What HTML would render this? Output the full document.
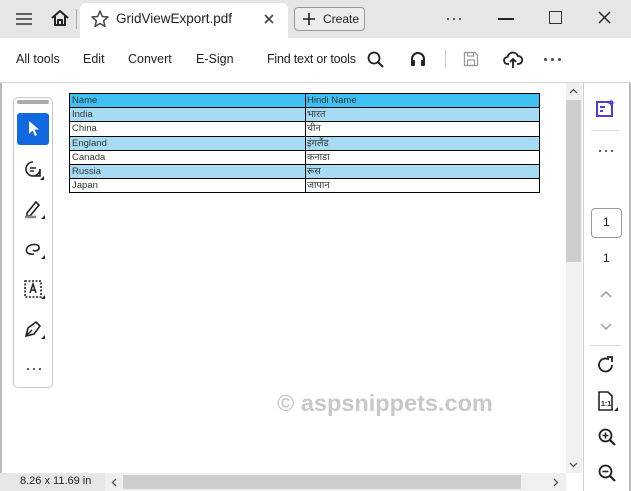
<!DOCTYPE html>
<html><head><meta charset="utf-8"><style>
*{margin:0;padding:0;box-sizing:border-box}
body{width:631px;height:491px;overflow:hidden;background:#fff;font-family:"Liberation Sans",sans-serif;position:relative;color:#222}
.abs{position:absolute}
.tb{left:0;top:0;width:631px;height:38px;background:#e6e6e6}
.tab{left:80px;top:3px;width:208px;height:35px;background:#fff;border-radius:6px 6px 0 0}
.t{font-size:13px;color:#222;white-space:nowrap}
.tool{top:38px;left:0;width:631px;height:45px;background:#fff;border-bottom:1px solid #d6d6d6}
.grid{position:absolute;left:69px;top:93px;width:471px;height:100px;border:1px solid #000;font-family:"Liberation Sans","DejaVu Sans",sans-serif;font-size:9.5px;color:#333}
.r{position:absolute;left:0;width:469px;height:14.2px;border-bottom:1px solid #000}
.r span{position:absolute;top:1px;line-height:12px;white-space:nowrap}
.r span:first-child{left:2px}
.r span:last-child{left:237px}
svg{position:absolute;overflow:visible}
.dots{position:absolute;display:flex;gap:4px}
.dots i{display:block;width:2px;height:2px;border-radius:1px;background:#333}
</style></head><body>
<div class="abs tb"></div>
<div class="abs tab"></div>
<svg style="left:15px;top:12px" width="18" height="14"><path d="M1 2H17M1 7H17M1 12H17" stroke="#333" stroke-width="1.6"/></svg>
<svg style="left:50px;top:9px" width="20" height="18"><path d="M2 9L10 2L18 9M5 7V16H15V7M8 16V11H12V16" stroke="#222" stroke-width="2" fill="none" stroke-linejoin="round"/></svg>
<div class="abs" style="left:76px;top:9px;width:1px;height:20px;background:#aaa"></div>
<svg style="left:91px;top:10px" width="18" height="18"><path d="M9 1L11.3 6.5L17 7L12.6 10.8L14 16.5L9 13.5L4 16.5L5.4 10.8L1 7L6.7 6.5Z" stroke="#444" stroke-width="1.5" fill="none" stroke-linejoin="round"/></svg>
<div class="abs t" style="left:116px;top:11px;font-size:13.5px">GridViewExport.pdf</div>
<svg style="left:264px;top:14px" width="10" height="10"><path d="M1 1L9 9M9 1L1 9" stroke="#444" stroke-width="1.6"/></svg>
<div class="abs" style="left:294px;top:7px;width:71px;height:24px;border:1px solid #999;border-radius:4px;background:#ececec"></div>
<svg style="left:303px;top:13px" width="12" height="12"><path d="M6 0V12M0 6H12" stroke="#222" stroke-width="1.6"/></svg>
<div class="abs t" style="left:323px;top:12px;font-size:12px">Create</div>
<div class="dots" style="left:447px;top:18px"><i></i><i></i><i></i></div>
<div class="abs" style="left:498px;top:18px;width:16px;height:2px;background:#222"></div>
<div class="abs" style="left:549px;top:11px;width:13px;height:13px;border:1.5px solid #333"></div>
<svg style="left:598px;top:11px" width="13" height="13"><path d="M1 1L12 12M12 1L1 12" stroke="#222" stroke-width="1.5"/></svg>

<div class="abs tool"></div>
<div class="abs t" style="left:16px;top:52px;font-size:12.5px">All tools</div>
<div class="abs t" style="left:83px;top:52px;font-size:12.5px">Edit</div>
<div class="abs t" style="left:128px;top:52px;font-size:12.5px">Convert</div>
<div class="abs t" style="left:196px;top:52px;font-size:12.5px">E-Sign</div>
<div class="abs t" style="left:267px;top:52px;font-size:12.5px;letter-spacing:-0.2px">Find text or tools</div>
<svg style="left:367px;top:51px" width="17" height="17"><circle cx="7" cy="7" r="5.5" stroke="#222" stroke-width="1.8" fill="none"/><path d="M11 11L16 16" stroke="#222" stroke-width="2"/></svg>
<svg style="left:410px;top:51px" width="16" height="16"><path d="M2 13V8A6 6 0 0 1 14 8V13" stroke="#222" stroke-width="2" fill="none"/><rect x="1" y="9" width="4" height="6" rx="1" fill="#222"/><rect x="11" y="9" width="4" height="6" rx="1" fill="#222"/></svg>
<div class="abs" style="left:445px;top:50px;width:1px;height:18px;background:#ccc"></div>
<svg style="left:463px;top:51px" width="16" height="16"><path d="M1.5 1.5H12L14.5 4V14.5H1.5Z" stroke="#999" stroke-width="1.3" fill="none"/><rect x="4.5" y="9" width="7" height="5.5" stroke="#999" stroke-width="1.2" fill="none"/><rect x="4.5" y="1.5" width="6" height="3.5" stroke="#999" stroke-width="1.2" fill="none"/></svg>
<svg style="left:503px;top:50px" width="20" height="19"><path d="M6 14H4.5A3.5 3.5 0 0 1 4.5 7A5.5 5.5 0 0 1 15 6A4 4 0 0 1 15.5 14H14" stroke="#222" stroke-width="1.8" fill="none"/><path d="M10 18V9M7 12L10 9L13 12" stroke="#222" stroke-width="1.8" fill="none"/></svg>
<div class="dots" style="left:544px;top:58px;gap:4px"><i style="width:3px;height:3px;background:#555"></i><i style="width:3px;height:3px;background:#555"></i><i style="width:3px;height:3px;background:#555"></i></div>

<div class="abs" style="left:0;top:83px;width:2px;height:408px;background:#bbb"></div>
<div class="abs" style="left:13px;top:97px;width:40px;height:291px;border:1px solid #c8c8c8;border-radius:5px"></div>
<div class="abs" style="left:17px;top:100px;width:32px;height:4px;background:#aaa;border-radius:2px"></div>
<div class="abs" style="left:17px;top:113px;width:32px;height:32px;background:#1268e0;border-radius:3px"></div>
<svg style="left:28px;top:120px" width="14" height="18"><path d="M1 1V14L4.5 10.5L7 16L9 15L6.5 9.5H11Z" fill="#fff"/></svg>
<svg style="left:24px;top:160px" width="20" height="20"><path d="M9 2A7 7 0 1 0 16 9V16H9" stroke="#222" stroke-width="1.6" fill="none"/><path d="M6 8H12M6 11H10" stroke="#222" stroke-width="1.6"/><path d="M20 16V20H16Z" fill="#222"/></svg>
<svg style="left:24px;top:199px" width="21" height="21"><path d="M3 14L12 3L15 6L6 17H3Z" stroke="#222" stroke-width="1.6" fill="none"/><path d="M1 18H12" stroke="#888" stroke-width="2.5"/><path d="M21 16V20H17Z" fill="#222"/></svg>
<svg style="left:24px;top:239px" width="21" height="21"><path d="M10 15C4 16 1 13 3 9C5 5 14 4 15 8C16 11 11 13 9 11" stroke="#222" stroke-width="1.6" fill="none"/><path d="M21 16V20H17Z" fill="#222"/></svg>
<svg style="left:24px;top:279px" width="21" height="21"><rect x="1" y="2" width="16" height="16" stroke="#222" stroke-width="1.6" stroke-dasharray="2 1.5" fill="none"/><path d="M6 14L9 5L12 14M7 11H11" stroke="#222" stroke-width="1.5" fill="none"/><path d="M21 16V20H17Z" fill="#222"/></svg>
<svg style="left:24px;top:319px" width="21" height="21"><path d="M2 17L4 9L12 3L16 7L10 15Z" stroke="#222" stroke-width="1.6" fill="none"/><path d="M2 17L8 11" stroke="#222" stroke-width="1.4"/><path d="M21 16V20H17Z" fill="#222"/></svg>
<div class="dots" style="left:27px;top:368px"><i></i><i></i><i></i></div>

<div class="grid">
<div class="r" style="top:0;background:#3ec1f2"><span>Name</span><span>Hindi Name</span></div>
<div class="r" style="top:14.2px;background:#a6dcf3"><span>India</span><span>भारत</span></div>
<div class="r" style="top:28.4px"><span>China</span><span>चीन</span></div>
<div class="r" style="top:42.6px;background:#a6dcf3"><span>England</span><span>इंगलैंड</span></div>
<div class="r" style="top:56.8px"><span>Canada</span><span>कनाडा</span></div>
<div class="r" style="top:71px;background:#a6dcf3"><span>Russia</span><span>रूस</span></div>
<div class="r" style="top:85.2px;border-bottom:none"><span>Japan</span><span>जापान</span></div>
<div class="abs" style="left:235px;top:0;width:1px;height:98px;background:#000"></div>
</div>

<div class="abs" style="left:277px;top:390px;font-size:23.5px;font-weight:bold;color:#c8c8c8;white-space:nowrap">© aspsnippets.com</div>

<div class="abs" style="left:566px;top:83px;width:16px;height:390px;background:#f0f0f0"></div>
<div class="abs" style="left:566px;top:100px;width:15px;height:162px;background:#cdcdcd"></div>
<svg style="left:569px;top:88px" width="9" height="6"><path d="M1 5L4.5 1.5L8 5" stroke="#555" stroke-width="1.3" fill="none"/></svg>
<svg style="left:569px;top:462px" width="9" height="6"><path d="M1 1L4.5 4.5L8 1" stroke="#555" stroke-width="1.3" fill="none"/></svg>
<div class="abs" style="left:0;top:473px;width:105px;height:18px;background:#e6e6e6"></div>
<div class="abs t" style="left:20px;top:475px;font-size:11px">8.26 x 11.69 in</div>
<div class="abs" style="left:105px;top:473px;width:461px;height:18px;background:#f0f0f0"></div>
<div class="abs" style="left:123px;top:475px;width:398px;height:14px;background:#cdcdcd"></div>
<svg style="left:111px;top:478px" width="6" height="9"><path d="M5 1L1.5 4.5L5 8" stroke="#555" stroke-width="1.3" fill="none"/></svg>
<svg style="left:553px;top:478px" width="6" height="9"><path d="M1 1L4.5 4.5L1 8" stroke="#555" stroke-width="1.3" fill="none"/></svg>

<div class="abs" style="left:583px;top:83px;width:1px;height:408px;background:#d0d0d0"></div>
<div class="abs" style="left:629px;top:83px;width:2px;height:408px;background:#bbb"></div>
<svg style="left:596px;top:98px" width="20" height="20"><rect x="1" y="4" width="15" height="14" stroke="#4b3fd6" stroke-width="2" fill="none"/><path d="M4 9H9M4 13H7" stroke="#4b3fd6" stroke-width="2"/><path d="M15 1L16 4L19 5L16 6L15 9L14 6L11 5L14 4Z" fill="#4b3fd6"/></svg>
<div class="abs" style="left:591px;top:130px;width:28px;height:1px;background:#ddd"></div>
<div class="dots" style="left:599px;top:150px"><i></i><i></i><i></i></div>
<div class="abs" style="left:591px;top:208px;width:31px;height:30px;border:1px solid #999;border-radius:4px"></div>
<div class="abs t" style="left:603px;top:215px;font-size:12px">1</div>
<div class="abs t" style="left:603px;top:251px;font-size:12px">1</div>
<svg style="left:600px;top:290px" width="12" height="8"><path d="M1 7L6 2L11 7" stroke="#aaa" stroke-width="1.8" fill="none"/></svg>
<svg style="left:600px;top:323px" width="12" height="8"><path d="M1 1L6 6L11 1" stroke="#aaa" stroke-width="1.8" fill="none"/></svg>
<div class="abs" style="left:590px;top:345px;width:32px;height:1px;background:#ddd"></div>
<svg style="left:597px;top:356px" width="18" height="18"><path d="M15 9A6.5 6.5 0 1 1 12 3.5" stroke="#222" stroke-width="1.8" fill="none"/><path d="M10 1H15V6" stroke="#222" stroke-width="1.8" fill="none"/></svg>
<svg style="left:598px;top:391px" width="20" height="22"><path d="M1 1H10L14 5V19H1Z" stroke="#222" stroke-width="1.6" fill="none"/><text x="3" y="15" font-size="7" font-family="Liberation Sans" font-weight="bold" fill="#222">1:1</text><path d="M20 16V20H16Z" fill="#222"/></svg>
<svg style="left:598px;top:428px" width="19" height="19"><circle cx="7.5" cy="7.5" r="6" stroke="#222" stroke-width="1.8" fill="none"/><path d="M12 12L17 17" stroke="#222" stroke-width="2.2"/><path d="M4.5 7.5H10.5M7.5 4.5V10.5" stroke="#222" stroke-width="1.6"/></svg>
<svg style="left:598px;top:464px" width="19" height="19"><circle cx="7.5" cy="7.5" r="6" stroke="#222" stroke-width="1.8" fill="none"/><path d="M12 12L17 17" stroke="#222" stroke-width="2.2"/><path d="M4.5 7.5H10.5" stroke="#222" stroke-width="1.6"/></svg>
</body></html>
